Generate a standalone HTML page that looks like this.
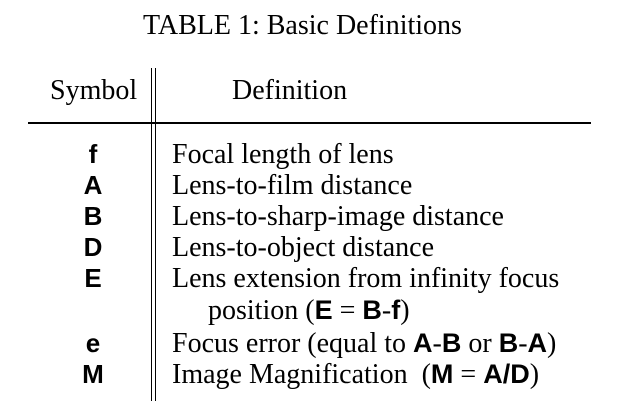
<!DOCTYPE html>
<html><head><style>
body{margin:0;width:629px;height:403px;background:#fff;position:relative;overflow:hidden;font-family:"Liberation Serif",serif;color:#000}
.t{position:absolute;font-size:28px;white-space:nowrap;line-height:1}
.s{position:absolute;font-family:"Liberation Sans",sans-serif;font-weight:bold;font-size:26px;width:60px;text-align:center;left:63px;line-height:1}
b{font-family:"Liberation Sans",sans-serif;font-weight:bold;font-size:27px}
</style></head><body>
<div class="t" style="left:143px;top:12px">TABLE 1: Basic Definitions</div>
<div class="t" style="left:50px;top:77px">Symbol</div>
<div class="t" style="left:232px;top:77px">Definition</div>
<div style="position:absolute;left:28px;top:122px;width:563px;height:2px;background:#000"></div>
<div style="position:absolute;left:151px;top:68px;width:1px;height:333px;background:#000"></div>
<div style="position:absolute;left:155px;top:68px;width:1px;height:333px;background:#000"></div>
<div class="s" style="top:141px">f</div>
<div class="s" style="top:172px">A</div>
<div class="s" style="top:203px">B</div>
<div class="s" style="top:234px">D</div>
<div class="s" style="top:265px">E</div>
<div class="s" style="top:330px">e</div>
<div class="s" style="top:361px">M</div>
<div class="t" style="left:172px;top:141px">Focal length of lens</div>
<div class="t" style="left:172px;top:172px">Lens-to-film distance</div>
<div class="t" style="left:172px;top:203px">Lens-to-sharp-image distance</div>
<div class="t" style="left:172px;top:234px">Lens-to-object distance</div>
<div class="t" style="left:172px;top:265px">Lens extension from infinity focus</div>
<div class="t" style="left:208px;top:297px">position (<b>E</b> = <b>B</b>-<b>f</b>)</div>
<div class="t" style="left:172px;top:330px">Focus error (equal to <b>A</b>-<b>B</b> or <b>B</b>-<b>A</b>)</div>
<div class="t" style="left:172px;top:361px">Image Magnification&nbsp; (<b>M</b> = <b>A/D</b>)</div>
</body></html>
